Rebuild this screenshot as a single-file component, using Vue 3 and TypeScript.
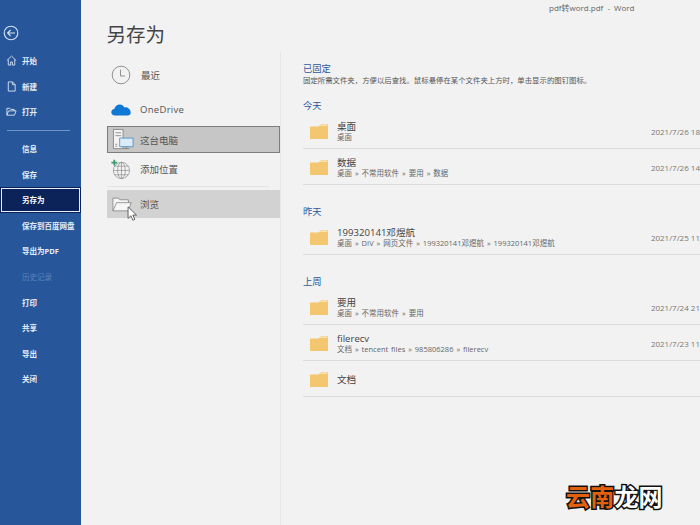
<script setup lang="ts">
interface Row { title: string; path?: string; date?: string }
interface Group { label: string; rows: Row[] }

const upper = [
  { label: '开始', icon: 'home' },
  { label: '新建', icon: 'new' },
  { label: '打开', icon: 'open' },
]
const lower = [
  { label: '信息' },
  { label: '保存' },
  { label: '另存为', active: true },
  { label: '保存到百度网盘' },
  { label: '导出为PDF' },
  { label: '历史记录', disabled: true },
  { label: '打印' },
  { label: '共享' },
  { label: '导出' },
  { label: '关闭' },
]
const hint = '固定所需文件夹\uFF0C方便以后查找。鼠标悬停在某个文件夹上方时\uFF0C单击显示的图钉图标。'
const groups: Group[] = [
  { label: '今天', rows: [
    { title: '桌面', path: '桌面', date: '2021/7/26 18' },
    { title: '数据', path: '桌面 » 不常用软件 » 要用 » 数据', date: '2021/7/26 14' },
  ] },
  { label: '昨天', rows: [
    { title: '199320141邓煜航', path: '桌面 » DIV » 网页文件 » 199320141邓煜航 » 199320141邓煜航', date: '2021/7/25 11' },
  ] },
  { label: '上周', rows: [
    { title: '要用', path: '桌面 » 不常用软件 » 要用', date: '2021/7/24 21' },
    { title: 'filerecv', path: '文档 » tencent files » 985806286 » filerecv', date: '2021/7/23 11' },
    { title: '文档' },
  ] },
]
</script>

<template>
  <div class="app">
    <aside class="side">
      <svg class="back" viewBox="0 0 16 16" width="16" height="16" fill="none" stroke="#d5e3f5" stroke-width="1.1">
        <circle cx="8" cy="8" r="6.8" />
        <path d="M12 8H4.6M7.6 5 4.6 8l3 3" />
      </svg>
      <nav class="nav upper">
        <div v-for="item in upper" :key="item.label" class="nav-item with-icon">
          <svg viewBox="0 0 12 12" width="11" height="11" fill="none" stroke="#d5e3f5" stroke-width="1">
            <path v-if="item.icon === 'home'" d="M1 6 6 1.2 11 6M2.5 5v6h2.6V7.6h1.8V11h2.6V5" />
            <path v-else-if="item.icon === 'new'" d="M2.5 1h4.6L10 3.9V11H2.5zM7 1v3h3" />
            <path v-else d="M1 10V2.5h3.2l1 1.2H9v1.6M1 10l1.8-4.7H11L9.2 10z" />
          </svg>
          <span>{{ item.label }}</span>
        </div>
      </nav>
      <div class="side-rule"></div>
      <nav class="nav lower">
        <div
          v-for="item in lower"
          :key="item.label"
          class="nav-item"
          :class="{ active: item.active, disabled: item.disabled }"
        >{{ item.label }}</div>
      </nav>
    </aside>

    <main class="main">
      <div class="titlebar">pdf转word.pdf &nbsp;-&nbsp; Word</div>
      <h1 class="heading">另存为</h1>
      <div class="columns">
        <section class="places">
          <div class="place recent">
            <svg viewBox="0 0 20 20" width="20" height="20" fill="none" stroke="#777" stroke-width=".8">
              <circle cx="10" cy="10" r="8.8" />
              <path d="M9.5 4.5V11h4.5" />
            </svg>
            <span>最近</span>
          </div>
          <div class="place drive">
            <svg viewBox="0 0 20 14" width="20" height="14">
              <path fill="#0f78d4" d="M4 13.5C1.6 13.5 .3 12 .3 10.3c0-1.8 1.3-3 3-3.2C4 4.400 6 2.500 8.800 2.500c2 0 3.700 1.100 4.500 2.900 3.300-.4 6.200 1.800 6.400 5 .1 1.800-1.200 3.100-3 3.100z" />
            </svg>
            <span>OneDrive</span>
          </div>
          <div class="place pc">
            <svg viewBox="0 0 24 24" width="23" height="23" fill="none" stroke="#777" stroke-width=".8">
              <path fill="#f4f4f4" d="M1.500 1.500h10v20h-10z" />
              <path d="M3.500 5h6M3.500 8h6M3.500 17h2M3.500 19h2" />
              <path fill="#dcebf8" stroke="#3a87c8" d="M8 10.500h14v9H8z" />
              <path d="M12 21.500h6M15 19.500v2" />
            </svg>
            <span>这台电脑</span>
          </div>
          <div class="place add">
            <svg viewBox="0 0 22 22" width="21" height="21" fill="none" stroke="#888" stroke-width=".7">
              <circle cx="12" cy="12" r="8.500" />
              <ellipse cx="12" cy="12" rx="4" ry="8.500" />
              <path d="M3.500 12h17M4.800 7.500h14.400M4.800 16.500h14.400M12 3.500v17" />
              <path stroke="#3c9a6b" stroke-width="1.800" d="M4.500 .8v6M1.500 3.800h6" />
            </svg>
            <span>添加位置</span>
          </div>
          <div class="places-rule"></div>
          <div class="place browse">
            <svg viewBox="0 0 22 18" width="20" height="17" fill="none" stroke="#777" stroke-width=".8">
              <path fill="#f6f6f6" d="M1 16V2h6l1.500 1.800H18V7" />
              <path fill="#f6f6f6" d="M1 16 5 7h16l-3 9z" />
            </svg>
            <span>浏览</span>
            <svg class="cursor" viewBox="0 0 12 18" width="11" height="16">
              <path fill="#fff" stroke="#444" stroke-width=".9" d="M1 1v13l3.200-3 2.200 5 2.200-1-2.200-4.800H10.500z" />
            </svg>
          </div>
        </section>

        <section class="recent-list">
          <h2 class="group-label pinned">已固定</h2>
          <p class="hint">{{ hint }}</p>
          <div v-for="group in groups" :key="group.label" class="group">
            <h2 class="group-label">{{ group.label }}</h2>
            <div v-for="row in group.rows" :key="row.title" class="row" :class="{ single: !row.path }">
              <svg viewBox="0 0 18 15" width="18" height="15">
                <path fill="#f3c670" d="M0 2.500h8.500L11.500 0H18v15H0z" />
                <path fill="#fbe6b8" d="M11.500 .6H17.400V2H10z" />
              </svg>
              <div class="row-text">
                <div class="row-title">{{ row.title }}</div>
                <div v-if="row.path" class="row-path">{{ row.path }}</div>
              </div>
              <div class="row-date">{{ row.date }}</div>
            </div>
          </div>
        </section>
      </div>
      <div class="mark"><span class="orange">云南</span><span class="white">龙网</span></div>
    </main>
  </div>
</template>

<style>
html, body { margin: 0; overflow: hidden; }
</style>

<style scoped>
.app {
  display: flex;
  width: 700px;
  height: 525px;
  overflow: hidden;
  background: #f2f2f2;
  font-family: "Open Sans", "Noto Sans CJK SC", sans-serif;
  color: #555;
}
.side {
  flex: 0 0 81px;
  background: #27579a;
  color: #e4ecf7;
  display: flex;
  flex-direction: column;
  font-size: 7.500px;
  font-weight: 700;
}
.back { margin: 25px 0 0 3px; }
.nav { display: flex; flex-direction: column; }
.upper { margin-top: 7px; }
.nav-item {
  height: 25.600px;
  display: flex;
  align-items: center;
  padding-left: 22px;
  box-sizing: border-box;
  white-space: nowrap;
}
.with-icon { padding-left: 6px; gap: 5px; }
.side-rule { height: 1px; margin: 5px 11px 5px 7px; background: #6f93c4; }
.active {
  background: #0b2358;
  outline: 1px solid #e8eef8;
  outline-offset: -2px;
  color: #fff;
}
.disabled { color: #5f84ba; font-weight: 400; }

.main { flex: 1; position: relative; min-width: 0; }
.titlebar {
  height: 13px;
  padding: 1px 0 0 468px;
  font-size: 8px;
  line-height: 13px;
  color: #666;
  white-space: nowrap;
}
.heading {
  margin: 7px 0 0 25.500px;
  font-size: 19.500px;
  line-height: 28px;
  font-weight: 400;
  color: #444;
}
.columns { display: flex; margin-top: 9px; }
.places {
  flex: 0 0 174px;
  margin-left: 26px;
  height: 474px;
  margin-top: -6px;
  padding-top: 7px;
  box-sizing: border-box;
  border-right: 1px solid #e6e6e6;
  font-size: 9.500px;
  display: flex;
  flex-direction: column;
}
.place {
  display: flex;
  align-items: center;
  color: #555;
  position: relative;
}
.place svg { flex: none; }
.recent { height: 32px; padding-left: 4px; gap: 10px; }
.drive { height: 30px; margin-top: 3px; padding-left: 4px; gap: 9px; letter-spacing: .3px; }
.pc {
  height: 27px;
  margin-top: 2px;
  padding-left: 5px;
  gap: 5px;
  background: #c6c6c6;
  outline: 1px solid #7d7d7d;
  outline-offset: -1px;
}
.add { height: 30px; margin-top: 1px; padding-left: 3px; gap: 9px; }
.places-rule { height: 1px; margin: 2px 11px 3px 0; background: #e2e2e2; }
.browse { height: 28px; padding-left: 5px; gap: 8px; background: #d2d2d2; }
.cursor { position: absolute; left: 20px; top: 16px; }

.recent-list { flex: 1; margin-left: 22px; min-width: 0; margin-top: 4px; }
.group-label {
  margin: 0 0 1px;
  font-size: 9.300px;
  line-height: 13px;
  font-weight: 400;
  color: #2b579a;
}
.pinned { margin: 0; }
.hint {
  margin: 0;
  font-size: 7.400px;
  line-height: 11px;
  color: #555;
  white-space: nowrap;
}
.group { padding-bottom: 20px; }
.group:first-of-type { padding-top: 13px; }
.row {
  display: flex;
  align-items: center;
  height: 36px;
  padding-left: 7px;
  box-sizing: border-box;
  border-bottom: 1px solid #dcdcdc;
}
.row svg { flex: none; margin: 2px 9px 0 0; }
.row-text { flex: 1; min-width: 0; padding-top: 1px; }
.row-title { font-size: 9.600px; line-height: 11px; color: #444; }
.row-path { font-size: 7.500px; line-height: 10px; color: #666; white-space: nowrap; word-spacing: 1px; }
.row-date {
  flex: 0 0 47.500px;
  margin-top: 2px;
  white-space: nowrap;
  font-size: 8px;
  color: #777;
}
.mark {
  position: absolute;
  left: 485px;
  top: 481px;
  font-size: 24px;
  line-height: 30px;
  font-weight: 700;
  font-family: "Noto Sans CJK SC", sans-serif;
  letter-spacing: .2px;
  paint-order: stroke fill;
  -webkit-text-stroke: 3px #111;
}
.orange { color: #e2600e; }
.white { color: #fff; }
</style>
